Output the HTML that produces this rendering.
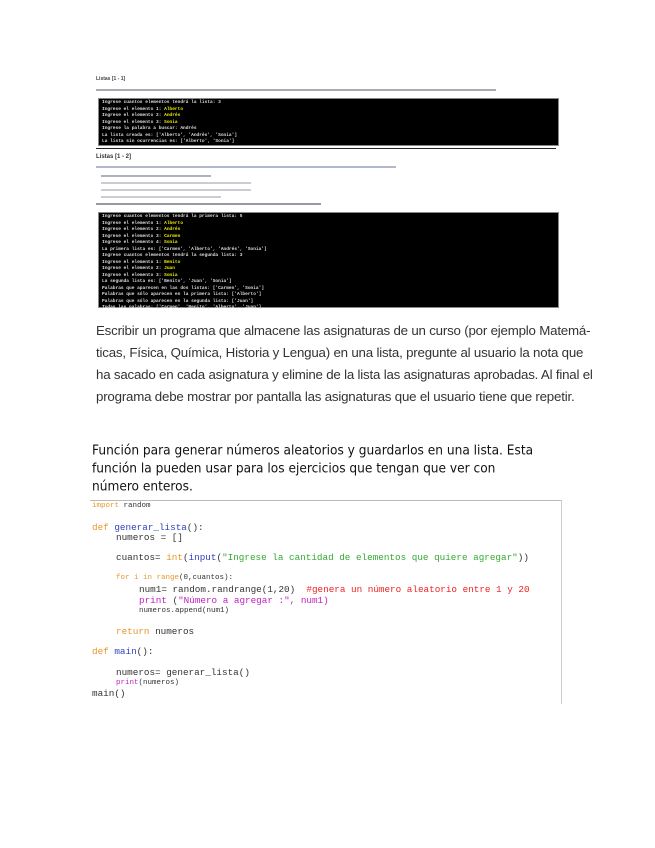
<!DOCTYPE html>
<html><head><meta charset="utf-8"><style>
body{margin:0;width:655px;height:848px;background:#fff;position:relative;overflow:hidden;font-family:"Liberation Sans",sans-serif}
.a{position:absolute;white-space:pre}
.blk{position:absolute;background:#000;border:1px solid #888;left:98px;width:459px}
.blk div{font:bold 4.5px "Liberation Mono",monospace;color:#ddd;height:6.5px;line-height:6.5px;padding-left:3px}
.y{color:#ee0}
.p{font-family:"Liberation Sans",sans-serif;font-size:13.3px;color:#333;left:96px;letter-spacing:-0.2px}
.f{font-family:"DejaVu Sans",sans-serif;font-size:12.2px;color:#111;left:92px;transform:scaleY(1.12);transform-origin:0 0}
.c{font:9.3px "Liberation Mono",monospace;color:#333;left:92px}
.o{color:#e8962a}.b{color:#3040c0}.g{color:#3a3}.r{color:#e22}.m{color:#c020c0}
</style></head><body>
<div class="a" style="left:96px;top:76px;font:bold 5px sans-serif;color:#444">Listas [1 - 1]</div>
<div class="a" style="left:96px;top:89px;width:400px;height:2px;background:#556;opacity:.5"></div>
<div class="blk" style="top:98px;height:45px;padding-top:1px">
<div>Ingrese cuantos elementos tendrá la lista: 3</div><div>Ingrese el elemento 1: <span class="y">Alberto</span></div><div>Ingrese el elemento 2: <span class="y">Andrés</span></div><div>Ingrese el elemento 3: <span class="y">Sonia</span></div><div class="y">Ingrese la palabra a buscar: Andrés</div><div>La lista creada es: ['Alberto', 'Andrés', 'Sonia']</div><div>La lista sin ocurrencias es: ['Alberto', 'Sonia']</div></div>
<div class="a" style="left:96px;top:148px;width:460px;height:1px;background:#222"></div>
<div class="a" style="left:96px;top:154px;font:bold 6px sans-serif;color:#333">Listas [1 - 2]</div>
<div class="a" style="left:96px;top:166px;width:300px;height:2px;background:#6670a0;opacity:.5"></div>
<div class="a" style="left:101px;top:175px;width:110px;height:2px;background:#667;opacity:.5"></div>
<div class="a" style="left:101px;top:182px;width:150px;height:2px;background:#99a;opacity:.5"></div>
<div class="a" style="left:101px;top:189px;width:150px;height:2px;background:#99a;opacity:.5"></div>
<div class="a" style="left:101px;top:196px;width:120px;height:2px;background:#99a;opacity:.5"></div>
<div class="a" style="left:96px;top:203px;width:225px;height:2px;background:#556;opacity:.6"></div>
<div class="blk" style="top:212px;height:93px;padding-top:1px">
<div>Ingrese cuantos elementos tendrá la primera lista: 5</div><div>Ingrese el elemento 1: <span class="y">Alberto</span></div><div>Ingrese el elemento 2: <span class="y">Andrés</span></div><div>Ingrese el elemento 3: <span class="y">Carmen</span></div><div>Ingrese el elemento 4: <span class="y">Sonia</span></div><div>La primera lista es: ['Carmen', 'Alberto', 'Andrés', 'Sonia']</div><div>Ingrese cuantos elementos tendrá la segunda lista: 3</div><div>Ingrese el elemento 1: <span class="y">Benito</span></div><div>Ingrese el elemento 2: <span class="y">Juan</span></div><div>Ingrese el elemento 3: <span class="y">Sonia</span></div><div>La segunda lista es: ['Benito', 'Juan', 'Sonia']</div><div>Palabras que aparecen en las dos listas: ['Carmen', 'Sonia']</div><div>Palabras que sólo aparecen en la primera lista: ['Alberto']</div><div>Palabras que sólo aparecen en la segunda lista: ['Juan']</div><div>Todas las palabras: ['Carmen', 'Benito', 'Alberto', 'Juan']</div></div>
<div class="a p" style="top:323px">Escribir un programa que almacene las asignaturas de un curso (por ejemplo Matemá-</div>
<div class="a p" style="top:345px">ticas, Física, Química, Historia y Lengua) en una lista, pregunte al usuario la nota que</div>
<div class="a p" style="top:367px">ha sacado en cada asignatura y elimine de la lista las asignaturas aprobadas. Al final el</div>
<div class="a p" style="top:389px">programa debe mostrar por pantalla las asignaturas que el usuario tiene que repetir.</div>
<div class="a f" style="top:442px">Función para generar números aleatorios y guardarlos en una lista. Esta</div>
<div class="a f" style="top:460px">función la pueden usar para los ejercicios que tengan que ver con</div>
<div class="a f" style="top:478px">número enteros.</div>
<div class="a" style="left:90px;top:500px;width:472px;height:1px;background:#bbb"></div>
<div class="a" style="left:561px;top:500px;width:1px;height:204px;background:#ccc"></div>
<div class="a c" style="top:502px;font-size:7.5px"><span class="o">import</span> random</div>
<div class="a c" style="top:522px"><span class="o">def</span> <span class="b">generar_lista</span>():</div>
<div class="a c" style="top:532px;left:116px">numeros = []</div>
<div class="a c" style="top:552px;left:116px">cuantos= <span class="o">int</span>(<span class="b">input</span>(<span class="g">"Ingrese la cantidad de elementos que quiere agregar"</span>))</div>
<div class="a c" style="top:574px;left:116px;font-size:7.5px"><span class="o">for i in range</span>(0,cuantos):</div>
<div class="a c" style="top:584px;left:139px">num1= random.randrange(1,20)  <span class="r">#genera un número aleatorio entre 1 y 20</span></div>
<div class="a c" style="top:595px;left:139px"><span class="m">print</span> (<span class="m">"Número a agregar :", num1)</span></div>
<div class="a c" style="top:607px;left:139px;font-size:7.5px">numeros.append(num1)</div>
<div class="a c" style="top:626px;left:116px"><span class="o">return</span> numeros</div>
<div class="a c" style="top:646px"><span class="o">def</span> <span class="b">main</span>():</div>
<div class="a c" style="top:667px;left:116px">numeros= generar_lista()</div>
<div class="a c" style="top:679px;left:116px;font-size:7.5px"><span class="m">print</span>(numeros)</div>
<div class="a c" style="top:688px">main()</div>
</body></html>
